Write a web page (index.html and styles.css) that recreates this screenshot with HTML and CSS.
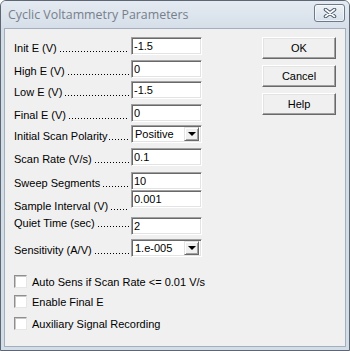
FILE: index.html
```html
<!DOCTYPE html>
<html lang="en">
<head>
    <meta charset="UTF-8">
    <title>Cyclic Voltammetry Parameters</title>
    <link rel="stylesheet" href="styles.css">
</head>
<body>
    <div class="window">
        <div class="titlebar">
            <span class="title">Cyclic Voltammetry Parameters</span>
            <button class="close-btn" title="Close">
                <svg width="14" height="10" viewBox="0 0 14 10">
                    <path d="M2.5 1.5 L11.5 8.5 M11.5 1.5 L2.5 8.5" stroke="#4d5b6c" stroke-width="3.6" stroke-linecap="round"/>
                    <path d="M2.5 1.5 L11.5 8.5 M11.5 1.5 L2.5 8.5" stroke="#ffffff" stroke-width="1.6" stroke-linecap="round"/>
                </svg>
            </button>
        </div>

        <div class="client">
            <div class="top">
                <div class="fields">
                    <label class="lbl">Init E (V)<span class="dots"></span></label>
                    <input class="field" type="text" value="-1.5">

                    <label class="lbl">High E (V)<span class="dots"></span></label>
                    <input class="field" type="text" value="0">

                    <label class="lbl">Low E (V)<span class="dots"></span></label>
                    <input class="field" type="text" value="-1.5">

                    <label class="lbl">Final E (V)<span class="dots"></span></label>
                    <input class="field" type="text" value="0">

                    <label class="lbl">Initial Scan Polarity<span class="dots tight"></span></label>
                    <div class="combo">
                        <span class="combo-text">Positive</span>
                        <span class="combo-btn"><span class="arrow"></span></span>
                    </div>

                    <label class="lbl">Scan Rate (V/s)<span class="dots"></span></label>
                    <input class="field" type="text" value="0.1">

                    <label class="lbl">Sweep Segments<span class="dots"></span></label>
                    <input class="field" type="text" value="10">

                    <label class="lbl lbl-low">Sample Interval (V)<span class="dots"></span></label>
                    <input class="field" type="text" value="0.001">

                    <label class="lbl lbl-high">Quiet Time (sec)<span class="dots"></span></label>
                    <input class="field" type="text" value="2">

                    <label class="lbl">Sensitivity (A/V)<span class="dots"></span></label>
                    <div class="combo">
                        <span class="combo-text">1.e-005</span>
                        <span class="combo-btn"><span class="arrow"></span></span>
                    </div>
                </div>

                <div class="buttons">
                    <button class="btn">OK</button>
                    <button class="btn">Cancel</button>
                    <button class="btn">Help</button>
                </div>
            </div>

            <div class="checks">
                <label class="check"><span class="box"></span>Auto Sens if Scan Rate &lt;= 0.01 V/s</label>
                <label class="check"><span class="box"></span>Enable Final E</label>
                <label class="check"><span class="box"></span>Auxiliary Signal Recording</label>
            </div>
        </div>
    </div>
</body>
</html>
```

FILE: styles.css
```css
* {
    margin: 0;
    padding: 0;
    box-sizing: border-box;
}

body {
    background-color: #ffffff;
    font-family: 'Liberation Sans', Arial, sans-serif;
    font-size: 11px;
    color: #000;
}

.window {
    width: 350px;
    height: 351px;
    border: 1px solid #5d6672;
    border-radius: 6px 6px 0 0;
    background: #d3dde8;
    padding: 0 3px 3px 3px;
    display: flex;
    flex-direction: column;
}

.titlebar {
    height: 27px;
    margin: 0 -3px;
    padding: 0 4px 0 7px;
    display: flex;
    align-items: center;
    justify-content: space-between;
    background: linear-gradient(#e4eaf1, #d6dfe9);
    border-radius: 5px 5px 0 0;
}

.title {
    font-family: 'Open Sans', 'Noto Sans', sans-serif;
    font-size: 12.4px;
    color: #76808c;
    margin-top: -1px;
}

.close-btn {
    width: 31px;
    height: 18px;
    margin-top: -4px;
    border: 1px solid #6d7a8b;
    border-radius: 3px;
    background: linear-gradient(#eef2f6, #d8e0ea);
    display: flex;
    align-items: center;
    justify-content: center;
    box-shadow: inset 0 0 0 1px rgba(255,255,255,0.6);
}

.client {
    flex: 1;
    background: #f0f0f0;
    border: 1px solid #a3afbd;
    padding: 8px 0 0 9px;
}

.top {
    display: flex;
}

.fields {
    display: grid;
    grid-template-columns: 117px 71px;
    grid-template-rows: 23px 21px 23px 21px 23px 24px 18px 27px 22px 19px;
    align-items: start;
}

.lbl {
    display: flex;
    line-height: 18px;
    height: 18px;
    margin-top: 2px;
    white-space: nowrap;
    width: 115px;
}

.dots {
    flex: 1;
    margin-left: 3px;
    background: linear-gradient(to right, #000 1px, transparent 1px) 0 12px / 3px 1px repeat-x;
}

.dots.tight {
    margin-left: 1px;
}

.lbl-low {
    margin-top: 7px;
}

.lbl-high {
    margin-top: -3px;
}

.field {
    width: 71px;
    height: 18px;
    font-family: 'Liberation Sans', Arial, sans-serif;
    font-size: 11px;
    padding: 0 2px;
    background: #fff;
    border-top: 1px solid #a0a0a0;
    border-left: 1px solid #a0a0a0;
    border-right: 1px solid #fff;
    border-bottom: 1px solid #fff;
    box-shadow: inset 1px 1px 0 #696969, inset -1px -1px 0 #e3e3e3;
    outline: none;
}

.combo {
    width: 71px;
    height: 18px;
    display: flex;
    align-items: center;
    background: #fff;
    border-top: 1px solid #a0a0a0;
    border-left: 1px solid #a0a0a0;
    border-right: 1px solid #fff;
    border-bottom: 1px solid #fff;
    box-shadow: inset 1px 1px 0 #696969, inset -1px -1px 0 #e3e3e3;
    padding: 2px 2px 2px 3px;
}

.combo-text {
    flex: 1;
    min-width: 0;
    line-height: 14px;
    white-space: nowrap;
}

.combo-btn {
    flex: none;
    width: 15px;
    height: 14px;
    background: #f0f0f0;
    border-top: 1px solid #e3e3e3;
    border-left: 1px solid #e3e3e3;
    border-right: 1px solid #696969;
    border-bottom: 1px solid #696969;
    box-shadow: inset 1px 1px 0 #fff, inset -1px -1px 0 #a0a0a0;
    display: flex;
    align-items: center;
    justify-content: center;
}

.arrow {
    width: 0;
    height: 0;
    border-left: 4px solid transparent;
    border-right: 4px solid transparent;
    border-top: 4px solid #000;
}

.buttons {
    margin-left: 60px;
    display: flex;
    flex-direction: column;
    gap: 6px;
}

.btn {
    width: 74px;
    height: 22px;
    font-family: 'Liberation Sans', Arial, sans-serif;
    font-size: 11px;
    color: #000;
    background: #f0f0f0;
    border-top: 1px solid #fff;
    border-left: 1px solid #fff;
    border-right: 1px solid #696969;
    border-bottom: 1px solid #696969;
    box-shadow: inset -1px -1px 0 #a0a0a0, inset 1px 1px 0 #e3e3e3;
}

.checks {
    margin-top: 17px;
    display: grid;
    grid-template-rows: 20px 22px 13px;
}

.check {
    display: flex;
    align-items: center;
    height: 13px;
    gap: 5px;
    white-space: nowrap;
}

.box {
    width: 13px;
    height: 13px;
    background: #fff;
    border-top: 1px solid #8f8f8f;
    border-left: 1px solid #8f8f8f;
    border-right: 1px solid #e6e6e6;
    border-bottom: 1px solid #e6e6e6;
    box-shadow: inset 1px 1px 0 #c8c8c8;
}
```
